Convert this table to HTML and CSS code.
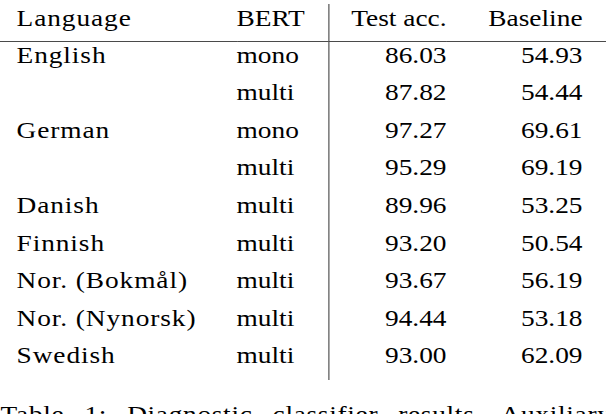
FILE: index.html
```html
<!DOCTYPE html>
<html>
<head>
<meta charset="utf-8">
<link rel="stylesheet" href="styles.css">
</head>
<body>
<div class="page">
  <div class="tbl">
    <div class="c c1 h">Language</div>
    <div class="c c2 h">BERT</div>
    <div class="c c3 h">Test acc.</div>
    <div class="c c4 h">Baseline</div>

    <div class="c c1">English</div><div class="c c2">mono</div><div class="c c3">86.03</div><div class="c c4">54.93</div>
    <div class="c c1"></div><div class="c c2">multi</div><div class="c c3">87.82</div><div class="c c4">54.44</div>
    <div class="c c1">German</div><div class="c c2">mono</div><div class="c c3">97.27</div><div class="c c4">69.61</div>
    <div class="c c1"></div><div class="c c2">multi</div><div class="c c3">95.29</div><div class="c c4">69.19</div>
    <div class="c c1">Danish</div><div class="c c2">multi</div><div class="c c3">89.96</div><div class="c c4">53.25</div>
    <div class="c c1">Finnish</div><div class="c c2">multi</div><div class="c c3">93.20</div><div class="c c4">50.54</div>
    <div class="c c1">Nor. (Bokmål)</div><div class="c c2">multi</div><div class="c c3">93.67</div><div class="c c4">56.19</div>
    <div class="c c1">Nor. (Nynorsk)</div><div class="c c2">multi</div><div class="c c3">94.44</div><div class="c c4">53.18</div>
    <div class="c c1">Swedish</div><div class="c c2">multi</div><div class="c c3">93.00</div><div class="c c4">62.09</div>
  </div>
  <p class="caption">Table 1: Diagnostic classifier results. Auxiliary</p>
</div>
</body>
</html>
```

FILE: styles.css
```css
html, body {
  margin: 0;
  padding: 0;
  background: #fff;
  overflow: hidden;
}
.page {
  width: 531.6px;
  transform: scaleX(1.14);
  transform-origin: 0 0;
  font-family: "Liberation Serif", "Times New Roman", serif;
  font-size: 24px;
  color: #000;
  padding-top: 4px;
}
.tbl {
  display: grid;
  grid-template-columns: 207.5px 80.3px 103.9px 139.9px;
  grid-auto-rows: 37.6px;
  line-height: 26.5px;
}
.c {
  white-space: nowrap;
}
.c1 {
  padding-left: 14.5px;
  letter-spacing: 0.8px;
}
.c3 {
  text-align: right;
  border-left: 1.6px solid #4a4a4a;
}
.c4 {
  text-align: right;
  padding-right: 20.6px;
}
.h {
  padding-top: 1px;
  border-bottom: 1.5px solid #4a4a4a;
  height: 36px;
}
.caption {
  margin: 21.5px 0 0 0.5px;
  line-height: 26.5px;
  letter-spacing: 0.6px;
  word-spacing: 11px;
  white-space: nowrap;
}
```
